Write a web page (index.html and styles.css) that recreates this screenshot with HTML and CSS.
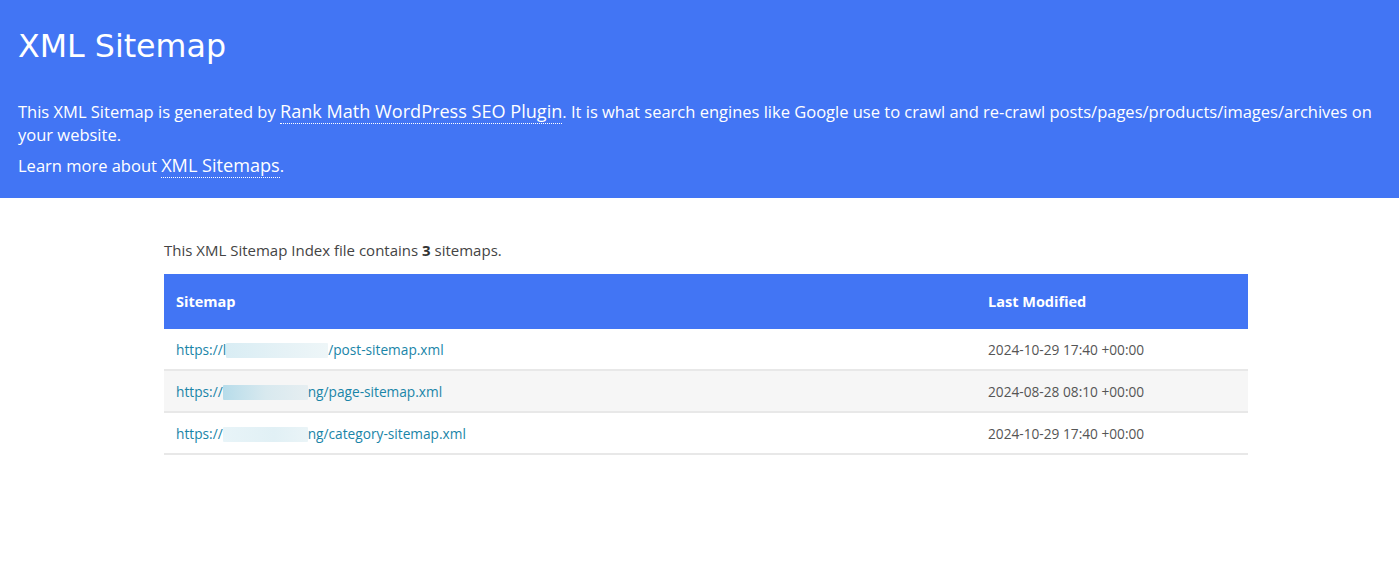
FILE: index.html
```html
<!DOCTYPE html>
<html lang="en">
<head>
<meta charset="utf-8">
<title>XML Sitemap</title>
<link rel="stylesheet" href="styles.css">
</head>
<body>
<header class="description">
  <h1 class="title">XML Sitemap</h1>
  <p class="intro">This XML Sitemap is generated by <a class="hl" href="#">Rank Math WordPress SEO Plugin</a>. It is what search engines like Google use to crawl and re-crawl posts/pages/products/images/archives on your website.</p>
  <p class="intro">Learn more about <a class="hl" href="#">XML Sitemaps</a>.</p>
</header>
<main class="content">
  <p class="count">This XML Sitemap Index file contains <strong>3</strong> sitemaps.</p>
  <table class="sitemap">
    <thead>
      <tr><th class="col-loc">Sitemap</th><th class="col-mod">Last Modified</th></tr>
    </thead>
    <tbody>
      <tr><td><a href="#">https://l<span class="blur b1"></span>/post-sitemap.xml</a></td><td>2024-10-29 17:40 +00:00</td></tr>
      <tr class="alt"><td><a href="#">https://<span class="blur b2"></span>ng/page-sitemap.xml</a></td><td>2024-08-28 08:10 +00:00</td></tr>
      <tr><td><a href="#">https://<span class="blur b3"></span>ng/category-sitemap.xml</a></td><td>2024-10-29 17:40 +00:00</td></tr>
    </tbody>
  </table>
</main>
</body>
</html>
```

FILE: styles.css
```css
html, body {
  margin: 0;
  padding: 0;
  background: #fff;
}
body {
  font-family: "Open Sans", "Noto Sans", sans-serif;
  color: #444;
}
.description {
  background: #4275f4;
  color: #fff;
  padding: 26px 18px 17px;
  height: 155px;
}
.title {
  font-family: "DejaVu Sans", Verdana, sans-serif;
  font-weight: normal;
  font-size: 31.7px;
  line-height: 40px;
  margin: 0 0 34px;
}
.intro {
  font-size: 16.5px;
  line-height: 23px;
  margin: 0 0 8px;
}
.hl {
  color: #fff;
  text-decoration: none;
  border-bottom: 1px dotted #fff;
  font-size: 18.1px;
  line-height: 20px;
}
.content {
  width: 1084px;
  margin: 0 0 0 164px;
  padding-top: 42px;
}
.count {
  font-size: 15px;
  line-height: 20px;
  margin: 0 0 14px;
  color: #444;
}
.count strong { font-weight: bold; color: #333; }
.sitemap {
  width: 100%;
  border-collapse: collapse;
}
.sitemap th {
  background: #4275f4;
  color: #fff;
  font-size: 14.5px;
  font-weight: bold;
  text-align: left;
  height: 55px;
  padding: 0 12px;
}
.col-mod { width: 248px; }
.sitemap td {
  height: 40px;
  padding: 0 12px;
  font-size: 13.7px;
  color: #555;
  border-bottom: 2px solid #e8e8e8;
}
.sitemap tr.alt td { background: #f6f6f6; }
.sitemap a {
  color: #1a85a8;
  text-decoration: none;
}
.blur {
  display: inline-block;
  height: 15px;
  vertical-align: -3px;
  background: linear-gradient(90deg, #d9edf4, #e6f2f6 60%, #eef6f8);
  border-radius: 1px;
}
.b1 { width: 102px; }
.b2 { width: 85px; background: linear-gradient(90deg, #b7dcea, #d8e9ef 50%, #e6eef1); }
.b3 { width: 85px; background: linear-gradient(90deg, #e8f4f8, #e1f0f5 60%, #eaf4f7); }
```
